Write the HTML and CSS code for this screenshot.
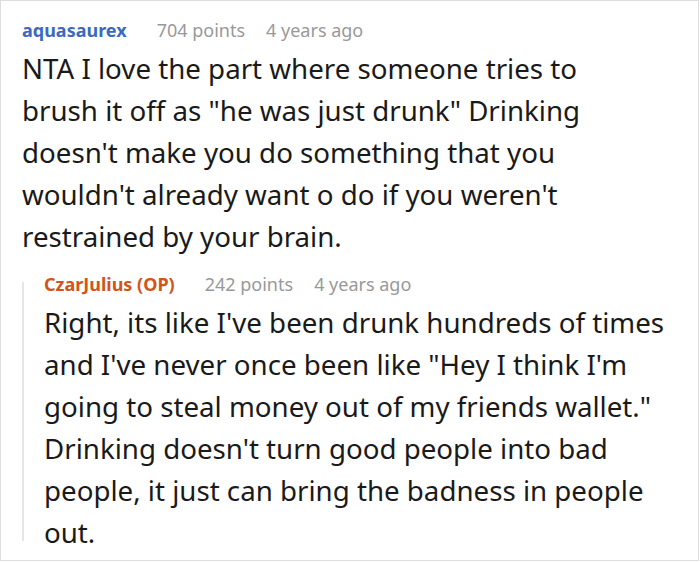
FILE: index.html
```html
<!DOCTYPE html>
<html>
<head>
<meta charset="utf-8">
<link rel="stylesheet" href="styles.css">
</head>
<body>
<div class="card">
  <div class="comment">
    <div class="meta">
      <span class="author">aquasaurex</span>
      <span class="info">704 points</span>
      <span class="info">4 years ago</span>
    </div>
    <p class="text">NTA I love the part where someone tries to brush it off as "he was just drunk" Drinking doesn't make you do something that you wouldn't already want o do if you weren't restrained by your brain.</p>
  </div>
  <div class="reply">
    <div class="thread-line"></div>
    <div class="comment reply-body">
      <div class="meta">
        <span class="author op">CzarJulius (OP)</span>
        <span class="info">242 points</span>
        <span class="info">4 years ago</span>
      </div>
      <p class="text">Right, its like I've been drunk hundreds of times and I've never once been like "Hey I think I'm going to steal money out of my friends wallet." Drinking doesn't turn good people into bad people, it just can bring the badness in people out.</p>
    </div>
  </div>
</div>
</body>
</html>
```

FILE: styles.css
```css
html, body {
  margin: 0;
  padding: 0;
  background: #ffffff;
}
.card {
  box-sizing: border-box;
  width: 699px;
  height: 561px;
  border: 1px solid #dedede;
  padding: 17px 20px 0 21px;
  font-family: "Noto Sans", sans-serif;
  overflow: hidden;
}
.meta {
  display: flex;
  font-size: 18px;
  line-height: 24px;
  height: 24px;
}
.author {
  font-weight: 700;
  color: #3a6ac0;
  margin-right: 30px;
}
.author.op {
  color: #d2541b;
}
.info {
  color: #999999;
  margin-right: 21px;
}
.text {
  margin: 5px 0 0 0;
  max-width: 628px;
  font-size: 27.7px;
  line-height: 42px;
  color: #1a1a1a;
}
.reply {
  display: flex;
  margin-top: 15px;
}
.thread-line {
  width: 2px;
  flex: none;
  background: #e6e6e6;
  margin-top: 10px;
  margin-bottom: 12px;
}
.reply-body {
  padding-left: 20px;
}
```
